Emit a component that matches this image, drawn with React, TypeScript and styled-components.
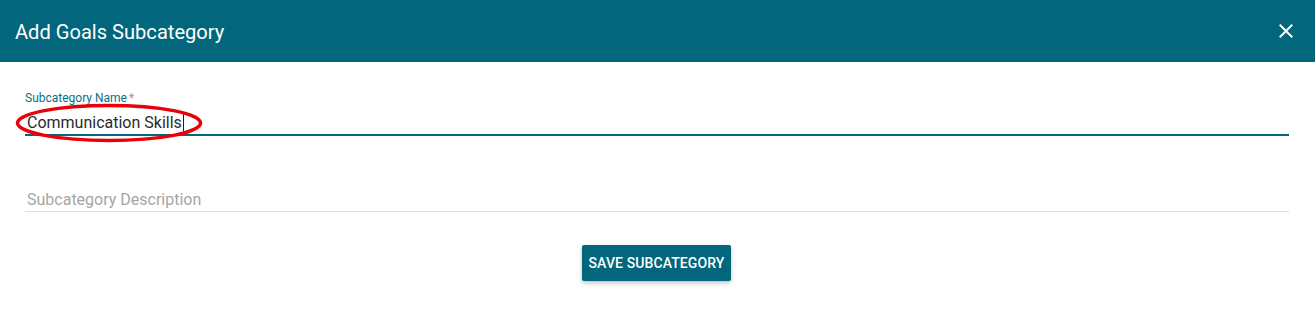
import React from "react";
import styled, { createGlobalStyle } from "styled-components";

const Global = createGlobalStyle`
  html, body { margin: 0; padding: 0; background: #fff; }
  body { font-family: Roboto, "Noto Sans", Arial, sans-serif; }
  * { box-sizing: border-box; }
`;

const Dialog = styled.div`
  width: 1315px;
  height: 309px;
  background: #fff;
  display: flex;
  flex-direction: column;
`;

const Header = styled.header`
  height: 62px;
  background: #02667c;
  display: flex;
  align-items: center;
  justify-content: space-between;
  padding: 0 17px 0 15px;
`;

const Title = styled.h2`
  margin: 0;
  font-size: 20.1px;
  font-weight: 400;
  color: #fff;
  padding-top: 1px;
`;

const CloseButton = styled.button`
  border: 0;
  background: transparent;
  padding: 0;
  width: 24px;
  height: 24px;
  display: flex;
  align-items: center;
  justify-content: center;
  cursor: pointer;
`;

const Body = styled.div`
  padding: 29px 26px 0 25px;
  display: flex;
  flex-direction: column;
`;

const Field = styled.div<{ $gap: number }>`
  position: relative;
  display: flex;
  flex-direction: column;
  margin-bottom: ${(p) => p.$gap}px;
`;

const Label = styled.label`
  font-size: 12px;
  line-height: 14px;
  color: #0b6f80;
  height: 14px;
`;

const Req = styled.span`
  color: #f07070;
  margin-left: 2px;
`;

const Input = styled.div<{ $active?: boolean }>`
  height: ${(p) => (p.$active ? 31 : 32)}px;
  display: flex;
  align-items: center;
  padding-left: 2px;
  padding-top: ${(p) => (p.$active ? 5 : 7)}px;
  font-size: 16px;
  color: ${(p) => (p.$active ? "#2b2b2b" : "#a6a6a6")};
  border-bottom: ${(p) => (p.$active ? "2px solid #02667c" : "1px solid #dedede")};
`;

const Caret = styled.span`
  display: inline-block;
  width: 1px;
  height: 17px;
  background: #222;
  margin-left: 1px;
`;

const Ring = styled.svg`
  position: absolute;
  left: -10px;
  top: 12px;
  pointer-events: none;
`;

const Actions = styled.div`
  display: flex;
  justify-content: center;
  padding-right: 1px;
`;

const SaveButton = styled.button`
  height: 36px;
  padding: 0 7px;
  border: 0;
  border-radius: 2px;
  background: #02667c;
  color: #fff;
  font-family: Roboto, Arial, sans-serif;
  font-size: 14px;
  font-weight: 500;
  letter-spacing: 0.1px;
  text-transform: uppercase;
  box-shadow: 0 2px 4px rgba(0, 0, 0, 0.25);
  cursor: pointer;
`;

export default function App() {
  return (
    <>
      <Global />
      <Dialog>
        <Header>
          <Title>Add Goals Subcategory</Title>
          <CloseButton aria-label="close">
            <svg width="24" height="24" viewBox="0 0 24 24">
              <path
                fill="#fff"
                d="M19 6.41L17.59 5 12 10.59 6.41 5 5 6.41 10.59 12 5 17.59 6.41 19 12 13.41 17.59 19 19 17.59 13.41 12z"
              />
            </svg>
          </CloseButton>
        </Header>
        <Body>
          <Field $gap={44}>
            <Label>
              Subcategory Name<Req>*</Req>
            </Label>
            <Input $active>
              Communication Skills
              <Caret />
            </Input>
            <Ring width="188" height="40" viewBox="0 0 188 40">
              <ellipse cx="94" cy="20" rx="91.5" ry="17.5" fill="none" stroke="#e8000b" strokeWidth="3.5" />
            </Ring>
          </Field>
          <Field $gap={33}>
            <Input>Subcategory Description</Input>
          </Field>
          <Actions>
            <SaveButton>Save Subcategory</SaveButton>
          </Actions>
        </Body>
      </Dialog>
    </>
  );
}
